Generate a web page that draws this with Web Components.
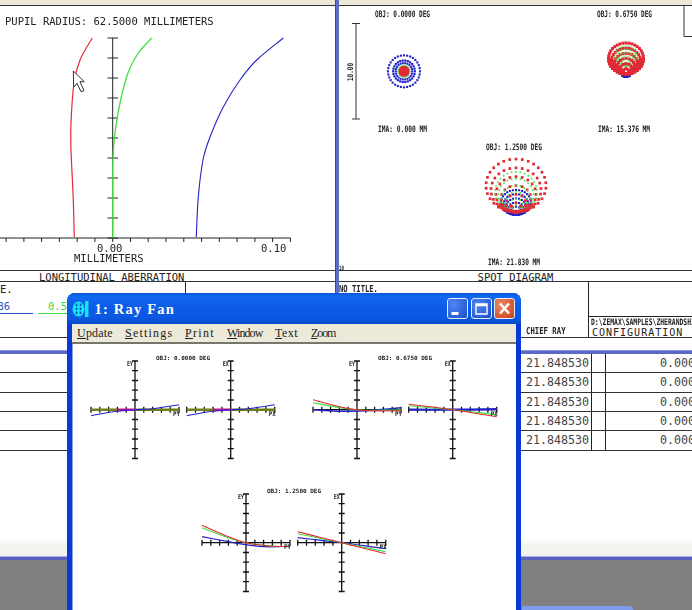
<!DOCTYPE html>
<html lang="en">
<head>
<meta charset="utf-8">
<title>Ray Fan</title>
<style>
  html, body { margin: 0; padding: 0; width: 692px; height: 610px; overflow: hidden; background: #fff; }
  body { position: relative; font-family: "DejaVu Sans Mono", monospace; }
</style>
</head>
<body>
<zemax-screen>
  <plot-panel slot="left" heading="LONGITUDINAL ABERRATION" inset="39" style="width:335px">
    <longitudinal-plot slot="plot"></longitudinal-plot>
    <left-info slot="info"></left-info>
  </plot-panel>
  <plot-panel slot="right" heading="SPOT DIAGRAM" style="flex:1">
    <spot-plot slot="plot"></spot-plot>
    <right-info slot="info"></right-info>
  </plot-panel>
  <lens-table slot="table" rows="5" chief="21.848530" config="0.000"></lens-table>
</zemax-screen>

<xp-window heading="1: Ray Fan">
  <fan-row>
    <ray-fan heading="OBJ: 0.0000 DEG" field="0"></ray-fan>
    <ray-fan heading="OBJ: 0.6750 DEG" field="1"></ray-fan>
  </fan-row>
  <fan-row>
    <ray-fan heading="OBJ: 1.2500 DEG" field="2"></ray-fan>
  </fan-row>
</xp-window>

<script>
const BLUE = "#2222c8";
const GREEN = "#3fe03f";
const RED = "#e22a36";
const OLIVE = "#6f7d12";
const MAGENTA = "#c0109a";

function svgLabel(x, y, text, width, size = 6.1, stretch = 1.45) {
    return `<text transform="translate(${x} ${y}) scale(1 ${stretch})" font-size="${size}" textLength="${width}" lengthAdjust="spacingAndGlyphs">${text}</text>`;
}

// catmull-rom through the points, so the aberration curves stay round
function smooth(points) {
    let d = `M${points[0][0]} ${points[0][1]}`;
    for (let i = 0; i < points.length - 1; i++) {
        const p0 = points[i - 1] || points[i];
        const p1 = points[i];
        const p2 = points[i + 1];
        const p3 = points[i + 2] || p2;
        const c1 = [p1[0] + (p2[0] - p0[0]) / 6, p1[1] + (p2[1] - p0[1]) / 6];
        const c2 = [p2[0] - (p3[0] - p1[0]) / 6, p2[1] - (p3[1] - p1[1]) / 6];
        d += `C${c1[0].toFixed(1)} ${c1[1].toFixed(1)} ${c2[0].toFixed(1)} ${c2[1].toFixed(1)} ${p2[0]} ${p2[1]}`;
    }
    return d;
}

class ZemaxScreen extends HTMLElement {
    constructor() {
        super();
        this.attachShadow({ mode: "open" }).innerHTML = `
          <style>
            :host { display: flex; flex-direction: column; width: 692px; height: 610px; background: #fff; overflow: hidden; }
            .graphs { display: flex; flex: none; }
            .divider { flex: none; width: 4px; background: #5c6cc8; box-sizing: border-box; border-left: 1px solid #3a4a9a; }
            .table { flex: none; }
            .paper { flex: 1; background: linear-gradient(to top, #f3f3ee 0, #f3f3ee 10px, #fff 18px); }
            .edge { flex: none; height: 4px; background: #5a60c0; border-top: 1px solid #a9b0e6; box-sizing: border-box; }
            .desk { flex: none; height: 50px; background: #808080; display: flex; align-items: flex-end; padding-left: 522px; }
            .tab { width: 111px; height: 4px; background: #7f9cec; border-radius: 0 5px 0 0; }
          </style>
          <div class="graphs">
            <slot name="left"></slot>
            <div class="divider"></div>
            <slot name="right"></slot>
          </div>
          <div class="table"><slot name="table"></slot></div>
          <div class="paper"></div>
          <div class="edge"></div>
          <div class="desk"><div class="tab"></div></div>
        `;
    }
}

class PlotPanel extends HTMLElement {
    constructor() {
        super();
        const inset = this.getAttribute("inset");
        this.attachShadow({ mode: "open" }).innerHTML = `
          <style>
            :host { display: flex; flex-direction: column; flex: none; min-width: 0; color: #222; font: 10.5px "DejaVu Sans Mono", monospace; }
            .strip { height: 5px; background: #ece9d8; border-bottom: 1px solid #333; }
            .plot { height: 264px; overflow: hidden; }
            .title { height: 10px; line-height: 12px; text-align: ${inset ? "left" : "center"}; padding-left: ${inset || 0}px; border-top: 1px solid #333; border-bottom: 1px solid #333; }
          </style>
          <div class="strip"></div>
          <div class="plot"><slot name="plot"></slot></div>
          <div class="title">${this.getAttribute("heading")}</div>
          <slot name="info"></slot>
        `;
    }
}

class LongitudinalPlot extends HTMLElement {
    constructor() {
        super();
        let ticks = "";
        for (let y = 38; y <= 238; y += 20) ticks += `M107.5 ${y}H118`;
        for (let i = -7; i <= 10; i++) {
            const x = (112.7 + i * 17.77).toFixed(1);
            ticks += `M${x} 238V242`;
        }
        const red = [[74.3,237],[73.3,200],[71,150],[71,123],[74,83],[80,60],[92.3,38]];
        const green = [[112.7,238],[112.7,180],[113,157],[115,133],[120,103],[128.3,72],[138.3,53],[151.7,38]];
        const blue = [[196.3,237],[198.3,197],[203,160],[210,137],[223.3,107],[240,80],[256.7,60],[283.3,38]];
        this.attachShadow({ mode: "open" }).innerHTML = `
          <style>
            :host { display: block; }
            svg { display: block; filter: blur(.25px); }
            text { font-family: "DejaVu Sans Mono", monospace; fill: #222; }
            path { fill: none; }
          </style>
          <svg width="335" height="264" viewBox="0 6 335 264">
            <text x="5" y="25" font-size="10.5">PUPIL RADIUS: 62.5000 MILLIMETERS</text>
            <path d="M112.7 38V238M0 238H290.7${ticks}" stroke="#222" stroke-width="1"/>
            <path d="${smooth(red)}" stroke="${RED}" stroke-width="1.2"/>
            <path d="${smooth(green)}" stroke="${GREEN}" stroke-width="1.3"/>
            <path d="${smooth(blue)}" stroke="${BLUE}" stroke-width="1.1"/>
            <text x="97" y="251.5" font-size="10.5">0.00</text>
            <text x="261" y="251.5" font-size="10.5">0.10</text>
            <text x="74" y="262" font-size="10.5">MILLIMETERS</text>
            <path d="M73.3 71L84.3 81.7H80L84 90.7L81 91.7L77 83.3L73.7 87.3Z" style="fill:#fff" stroke="#333" stroke-width="1"/>
          </svg>
        `;
    }
}

class SpotPlot extends HTMLElement {
    constructor() {
        super();
        this.attachShadow({ mode: "open" }).innerHTML = `
          <style>
            :host { display: block; }
            svg { display: block; filter: blur(.3px); }
            text { font-family: "DejaVu Sans Mono", monospace; font-weight: 700; fill: #222; }
          </style>
          <svg width="353" height="264" viewBox="339 6 353 264">
            ${svgLabel(375, 17, "OBJ: 0.0000 DEG", 55)}
            ${svgLabel(597, 17, "OBJ: 0.6750 DEG", 55)}
            ${svgLabel(378, 132, "IMA: 0.000 MM", 49)}
            ${svgLabel(598, 132, "IMA: 15.376 MM", 52)}
            ${svgLabel(486, 150, "OBJ: 1.2500 DEG", 56)}
            ${svgLabel(488, 265, "IMA: 21.830 MM", 52)}
            ${svgLabel(339, 270, "10", 5, 5, 1.2)}
            <path d="M352 23.5H360M356 23.5V119M352 119H360" fill="none" stroke="#333" stroke-width="1"/>
            <g transform="translate(353 81) rotate(-90)">${svgLabel(0, 0, "10.00", 18, 6, 1.3)}</g>
            <path d="M684 6V36.5H692" fill="none" stroke="#333" stroke-width="1"/>
            ${this.centered()}
            ${this.shell(626, { red: [17.5, 15.5, 74], green: [11, 10, 66], blue: [4, 1.5, 76.5] }, { count: 6, size: 3, band: 15, greenSize: 1.1 })}
            ${this.shell(516, { red: [30, 26.5, 212], green: [21, 20, 212], blue: [15, 12.5, 215] }, { count: 5, size: 2.7, band: 8, greenSize: 1.6 })}
          </svg>
        `;
    }

    dot(x, y, color, size) {
        return `<rect x="${(x - size / 2).toFixed(1)}" y="${(y - size / 2).toFixed(1)}" width="${size}" height="${size}" fill="${color}"/>`;
    }

    centered() {
        const cx = 404, cy = 71.3;
        const rings = [[16, 32, BLUE, 2.1], [10.8, 26, BLUE, 2.2], [8.2, 22, BLUE, 2], [5.8, 18, GREEN, 1.5], [4, 14, RED, 2.8], [2, 8, RED, 2.8], [0, 1, RED, 2.8]];
        let out = "";
        for (const [r, n, color, size] of rings) {
            for (let i = 0; i < n; i++) {
                const a = i / n * Math.PI * 2;
                out += this.dot(cx + r * Math.cos(a), cy + r * Math.sin(a), color, size);
            }
        }
        return out;
    }

    // coma pattern: every ring is a circle resting on the same bottom point
    shell(cx, spec, { count, size, band, greenSize }) {
        const points = ([rx, ry, apex], color, dotSize, keep = () => true) => {
            let out = "";
            for (let k = 1; k <= 6; k++) {
                const n = count * k;
                for (let i = 0; i < n; i++) {
                    const a = i / n * Math.PI * 2;
                    const x = cx + rx * k / 6 * Math.sin(a);
                    const y = apex - ry * k / 6 * (1 + Math.cos(a));
                    if (keep(y)) out += this.dot(x, y, color, dotSize);
                }
            }
            return out;
        };
        const bottom = spec.red[2] - band;
        return points(spec.blue, BLUE, 2.1)
            + points(spec.red, RED, size)
            + points(spec.green, GREEN, greenSize)
            + points(spec.red, RED, size, y => y > bottom);
    }
}

class LeftInfo extends HTMLElement {
    constructor() {
        super();
        this.attachShadow({ mode: "open" }).innerHTML = `
          <style>
            :host { display: grid; grid-template-columns: 186px 1fr; height: 55px; border-bottom: 1px solid #333; overflow: hidden; font: 10.5px "DejaVu Sans Mono", monospace; color: #222; }
            .text { border-right: 1px solid #222; }
            .first { height: 18px; line-height: 14px; }
            .legend { display: flex; gap: 5px; margin-left: -25px; }
            .legend div { width: 58px; flex: none; height: 14px; line-height: 12px; box-sizing: border-box; border-bottom: 1px solid; white-space: nowrap; overflow: hidden; }
            .blue { color: #2a55c8; padding-left: 3.5px; }
            .green { color: #3fd63f; padding-left: 10px; }
          </style>
          <div class="text">
            <div class="first">E.</div>
            <div class="legend"><div class="blue">0.486</div><div class="green">0.588</div></div>
          </div>
          <div></div>
        `;
    }
}

class RightInfo extends HTMLElement {
    constructor() {
        super();
        this.attachShadow({ mode: "open" }).innerHTML = `
          <style>
            :host { display: grid; grid-template-columns: 250px 1fr; height: 55px; border-bottom: 1px solid #333; overflow: hidden; font: 10.5px "DejaVu Sans Mono", monospace; color: #222; }
            .text { display: flex; flex-direction: column; justify-content: space-between; border-right: 1px solid #222; }
            .first { line-height: 14px; font-size: 7.2px; font-weight: 700; transform: scaleY(1.35); transform-origin: 0 50%; }
            .chief { margin: 0 0 1px 187px; line-height: 10px; font-size: 7.3px; font-weight: 700; transform: scaleY(1.3); }
            .config { display: flex; flex-direction: column; justify-content: flex-end; }
            .path { border-top: 1px solid #222; margin-top: 34px; padding-left: 2px; height: 10px; line-height: 11px; font-size: 6.4px; font-weight: 700; white-space: nowrap; }
            .path span { display: inline-block; transform: scaleY(1.4); }
            .name { height: 10px; line-height: 11px; padding-left: 3px; font-size: 10px; letter-spacing: 1px; white-space: nowrap; }
          </style>
          <div class="text">
            <div class="first">NO TITLE.</div>
            <div class="chief">CHIEF RAY</div>
          </div>
          <div class="config">
            <div class="path"><span>D:\\ZEMAX\\SAMPLES\\ZHERANDSHI</span></div>
            <div class="name">CONFIGURATION</div>
          </div>
        `;
    }
}

class LensTable extends HTMLElement {
    constructor() {
        super();
        const count = Number(this.getAttribute("rows"));
        const chief = this.getAttribute("chief");
        const config = this.getAttribute("config");
        const rows = Array.from({ length: count }, () => `
          <div class="row"><div class="chief">${chief}</div><div class="gap"></div><div class="config">${config}</div></div>
        `).join("");
        this.attachShadow({ mode: "open" }).innerHTML = `
          <style>
            :host { display: block; font: 11.65px "DejaVu Sans Mono", monospace; color: #444; }
            .space { height: 12px; }
            .band { height: 4px; background: #5c68c6; border-top: 1px solid #8a94dc; box-sizing: border-box; }
            .row { display: flex; width: 696px; height: 19.33px; box-sizing: border-box; border-bottom: 1px solid #333; line-height: 18px; }
            .chief { flex: none; width: 592px; box-sizing: border-box; border-right: 1px solid #222; padding-right: 2px; text-align: right; }
            .gap { flex: none; width: 14px; box-sizing: border-box; border-right: 1px solid #222; }
            .config { flex: 1; text-align: right; padding-right: 1px; }
          </style>
          <div class="space"></div>
          <div class="band"></div>
          ${rows}
        `;
    }
}

class XpWindow extends HTMLElement {
    constructor() {
        super();
        // the original menu font is fixed pitch, 6px a letter
        const menu = [["Update", .2], ["Settings", 1.2], ["Print", 1.3], ["Window", -.9], ["Text", .5], ["Zoom", -1.1]]
            .map(([name, spacing]) => `<span style="width:${name.length * 6}px;letter-spacing:${spacing}px"><u>${name[0]}</u>${name.slice(1)}</span>`).join("");
        this.attachShadow({ mode: "open" }).innerHTML = `
          <style>
            :host { position: absolute; left: 67px; top: 293px; width: 454px; height: 330px; display: flex; flex-direction: column; box-sizing: border-box; background: #0a3ad6; border-radius: 8px 8px 0 0; overflow: hidden; }
            .bar { flex: none; height: 31px; display: flex; align-items: center; gap: 2.5px; padding: 0 6px 0 5px; color: #fff; background: linear-gradient(#0b56dc 0, #1268ee 12%, #0c5ae6 45%, #0b58e2 80%, #0a48c8 100%); }
            .bar > svg { flex: none; margin-right: 2px; }
            .caption { flex: 1; font: 700 14.5px "Liberation Serif", serif; letter-spacing: 1.2px; white-space: pre; padding-top: 1px; }
            .btn { flex: none; width: 21px; height: 21px; box-sizing: border-box; border: 1px solid #e8eefc; border-radius: 3px; background: radial-gradient(circle at 30% 30%, #4f86f0, #2a5fd8 70%, #1c48bc); display: block; }
            .close { background: radial-gradient(circle at 30% 30%, #e88a64, #d8542e 70%, #bc3a1c); }
            .body { flex: 1; display: flex; flex-direction: column; margin: 0 5px; background: #fff; min-height: 0; }
            .menu { flex: none; height: 20px; box-sizing: border-box; display: flex; gap: 12px; padding: 0 0 0 5px; align-items: center; background: #ece9d8; border-bottom: 2px solid #77766c; font: 12px "Liberation Serif", serif; color: #222; white-space: pre; }
            .menu span { flex: none; }
            .client { flex: 1; display: flex; flex-direction: column; gap: 21px; padding-top: 7px; border-left: 1px solid #8ea0d8; }
          </style>
          <div class="bar">
            <svg width="18" height="16" viewBox="0 0 18 16">
              <ellipse cx="6.5" cy="8" rx="6" ry="7.5" fill="#14e4f4"/>
              <path d="M4.5 2.5V13.5M8.5 2.5V13.5" stroke="#0a4ab8" stroke-width="1.6" stroke-dasharray="2.5 1.5"/>
              <rect x="13" y="0" width="3.5" height="16" fill="#14e4f4"/>
            </svg>
            <div class="caption">${this.getAttribute("heading")}</div>
            <div class="btn"><svg width="19" height="19" viewBox="0 0 19 19"><rect x="3.5" y="13" width="7" height="3" fill="#fff"/></svg></div>
            <div class="btn"><svg width="19" height="19" viewBox="0 0 19 19"><path d="M4 5H15V15H4ZM4 6.5H15" fill="none" stroke="#fff" stroke-width="1.4"/></svg></div>
            <div class="btn close"><svg width="19" height="19" viewBox="0 0 19 19"><path d="M5 4.5L14 14.5M14 4.5L5 14.5" stroke="#fff" stroke-width="2.4"/></svg></div>
          </div>
          <div class="body">
            <div class="menu">${menu}</div>
            <div class="client"><slot></slot></div>
          </div>
        `;
    }
}

class FanRow extends HTMLElement {
    constructor() {
        super();
        this.attachShadow({ mode: "open" }).innerHTML = `
          <style>
            :host { display: flex; justify-content: center; gap: 27px; flex: none; }
          </style>
          <slot></slot>
        `;
    }
}

// offsets in pixels from the axis, at pupil coordinates -1..1, for the EY and EX plots of each field
const FANS = [
    [
        [[OLIVE, 2.4, [[-1,0],[-.4,0]]], [MAGENTA, 2.4, [[-.4,0],[0,0]]], [OLIVE, 2.4, [[0,0],[1,0]]], [BLUE, 1.1, [[-1,6],[-.5,2],[0,0],[.4,-1],[1,-5]]]],
        [[OLIVE, 2.4, [[-1,0],[-.4,0]]], [MAGENTA, 2.4, [[-.4,0],[0,0]]], [OLIVE, 2.4, [[0,0],[1,0]]], [BLUE, 1.1, [[-1,6],[-.5,2],[0,0],[.4,-1],[1,-5]]]]
    ],
    [
        [[BLUE, 1.5, [[-1,0],[-.3,1.5],[.3,.8],[1,-2]]], [GREEN, 1.1, [[-1,-7],[-.4,-2],[0,0],[.5,.6],[1,.2]]], [RED, 1.1, [[-1,-10],[-.4,-3],[0,0],[.5,1.2],[1,1]]]],
        [[BLUE, 2.2, [[-1,0],[0,0],[1,-.5]]], [GREEN, 1.1, [[-1,-4],[-.5,-2],[0,0],[.5,2.5],[1,5]]], [RED, 1.1, [[-1,-5.5],[-.5,-3],[0,0],[.5,3.5],[1,7]]]]
    ],
    [
        [[BLUE, 1.2, [[-1,-6],[-.4,-1],[0,2],[.4,4],[.8,4]]], [GREEN, 1.1, [[-1,-15],[-.4,-5],[0,0],[.5,3],[1,4]]], [RED, 1.1, [[-1,-17.5],[-.4,-6],[0,0],[.5,3],[1,4]]]],
        [[BLUE, 1.2, [[-1,-5],[-.5,-2.5],[0,0],[.5,3],[1,6]]], [GREEN, 1.1, [[-1,-9],[-.5,-4.5],[0,0],[.5,4.5],[1,9]]], [RED, 1.1, [[-1,-11],[-.5,-5.5],[0,0],[.5,5.5],[1,11]]]]
    ]
];

class RayFan extends HTMLElement {
    constructor() {
        super();
        const plots = FANS[Number(this.getAttribute("field"))];
        this.attachShadow({ mode: "open" }).innerHTML = `
          <style>
            :host { display: block; flex: none; width: 195px; height: 112px; }
            svg { display: block; overflow: visible; filter: blur(.3px); }
            text { font-family: "DejaVu Sans Mono", monospace; font-weight: 700; fill: #222; }
          </style>
          <svg width="195" height="112" viewBox="0 0 195 112">
            ${svgLabel(70, 9, this.getAttribute("heading"), 54, 5.8, 1)}
            ${this.plot(49, plots[0], "EY", "PY")}
            ${this.plot(144.7, plots[1], "EX", "PX")}
          </svg>
        `;
    }

    plot(cx, curves, yName, xName) {
        const cy = 58.7, half = 44;
        let ticks = "";
        for (let i = -5; i <= 5; i++) {
            const y = (cy + i * 9.75).toFixed(1);
            const x = (cx + i * 8.8).toFixed(1);
            ticks += `M${cx - 3} ${y}H${cx + 3}M${x} ${cy - 3}V${cy + 3}`;
        }
        const lines = curves.map(([color, width, pts]) => {
            const d = smooth(pts.map(([t, dy]) => [+(cx + t * half).toFixed(1), +(cy + dy).toFixed(1)]));
            return `<path d="${d}" fill="none" stroke="${color}" stroke-width="${width}"/>`;
        }).join("");
        return `
            <path d="M${cx} ${cy - 48.75}V${cy + 48.75}M${cx - half} ${cy}H${cx + half}${ticks}" fill="none" stroke="#111" stroke-width="1.3"/>
            ${lines}
            ${svgLabel(cx - 8, 14.5, yName, 6, 5.8, 1.1)}
            ${svgLabel(cx + 38, 65, xName, 7, 5.8, 1.1)}
        `;
    }
}

customElements.define("zemax-screen", ZemaxScreen);
customElements.define("plot-panel", PlotPanel);
customElements.define("longitudinal-plot", LongitudinalPlot);
customElements.define("spot-plot", SpotPlot);
customElements.define("left-info", LeftInfo);
customElements.define("right-info", RightInfo);
customElements.define("lens-table", LensTable);
customElements.define("xp-window", XpWindow);
customElements.define("fan-row", FanRow);
customElements.define("ray-fan", RayFan);
</script>
</body>
</html>
